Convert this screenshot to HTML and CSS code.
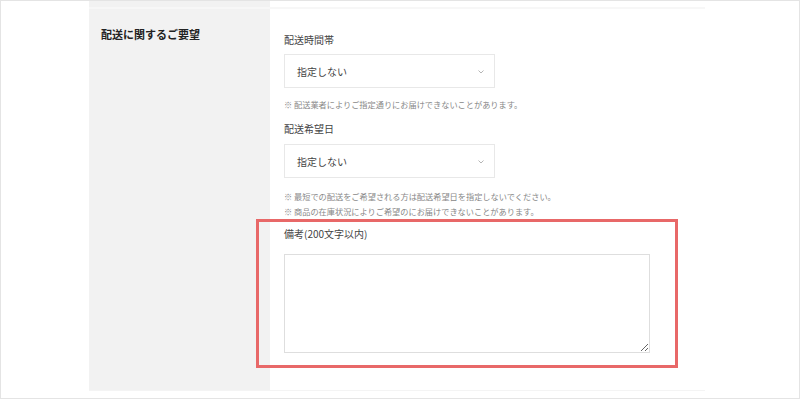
FILE: index.html
```html
<!DOCTYPE html>
<html lang="ja">
<head>
<meta charset="utf-8">
<title>配送に関するご要望</title>
<link rel="stylesheet" href="styles.css">
</head>
<body>
<div class="frame">
  <div class="table">
    <div class="row prev">
      <div class="th"></div>
      <div class="td"></div>
    </div>
    <div class="row main">
      <div class="th"><div class="th-label">配送に関するご要望</div></div>
      <div class="td">
        <div class="field-label">配送時間帯</div>
        <div class="select">
          <span>指定しない</span>
          <svg class="chev" width="6" height="4" viewBox="0 0 6 4"><path d="M0.5 0.5 L3 3 L5.5 0.5" fill="none" stroke="#b5b5b5" stroke-width="1"/></svg>
        </div>
        <p class="note first">※ 配送業者によりご指定通りにお届けできないことがあります。</p>
        <div class="field-label second">配送希望日</div>
        <div class="select sel2">
          <span>指定しない</span>
          <svg class="chev" width="6" height="4" viewBox="0 0 6 4"><path d="M0.5 0.5 L3 3 L5.5 0.5" fill="none" stroke="#b5b5b5" stroke-width="1"/></svg>
        </div>
        <p class="note n2">※ 最短での配送をご希望される方は配送希望日を指定しないでください。</p>
        <p class="note n3">※ 商品の在庫状況によりご希望のにお届けできないことがあります。</p>
        <div class="remarks">
          <div class="field-label third">備考(200文字以内)</div>
          <textarea class="textarea"></textarea>
          <div class="highlight"></div>
        </div>
      </div>
    </div>
  </div>
</div>
</body>
</html>
```
FILE: styles.css
```css
* { box-sizing: border-box; }
html, body { margin: 0; padding: 0; background: #fff; }
body { font-family: "Noto Sans CJK JP", "Noto Sans", sans-serif; color: #333; }

.frame {
  width: 800px;
  height: 399px;
  border: 1px solid #e4e4e4;
  padding-left: 88px;
  overflow: hidden;
}

.table { width: 616px; }

.row {
  display: grid;
  grid-template-columns: 181px 1fr;
}

.row.prev { height: 8px; border-bottom: 2px solid #f7f7f7; }
.row.main { border-bottom: 1px solid #f4f4f4; }

.th { background: #f2f2f2; }
.td { background: #fff; }

.main .th { padding: 17px 0 0 12px; }
.th-label {
  font-size: 11px;
  line-height: 16px;
  font-weight: 700;
  color: #222;
}

.main .td { padding: 23px 0 37px 14px; }

.field-label {
  font-size: 10px;
  line-height: 16px;
  color: #444;
}
.field-label.second { margin-top: 9px; }

.select {
  margin-top: 6px;
  width: 211px;
  height: 34px;
  border: 1px solid #e8e8e8;
  display: flex;
  align-items: center;
  justify-content: space-between;
  padding: 0 10px 0 12px;
  font-size: 10px;
  color: #444;
}
.select.sel2 { margin-top: 7px; }
.chev { display: block; margin-top: 1px; }

.note {
  margin: 0;
  font-size: 8.2px;
  line-height: 15px;
  color: #888;
}
.note.first { margin-top: 9px; }
.note.n2 { margin-top: 11px; }

.remarks {
  position: relative;
  margin-top: 7px;
}

.textarea {
  display: block;
  margin-top: 12px;
  width: 366px;
  height: 99px;
  border: 1px solid #dedede;
  border-radius: 0;
  padding: 4px;
  font-family: inherit;
  font-size: 10px;
  outline: none;
}

.highlight {
  position: absolute;
  left: -28px;
  top: -7px;
  width: 422px;
  height: 149px;
  border: 3px solid #e86868;
  pointer-events: none;
}
```
